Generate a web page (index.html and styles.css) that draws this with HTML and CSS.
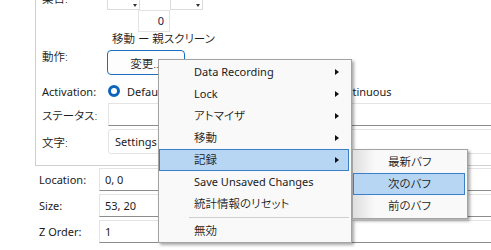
FILE: index.html
```html
<!DOCTYPE html>
<html lang="ja">
  <head>
    <meta charset="utf-8" />
    <title>properties</title>
    <link rel="stylesheet" href="styles.css">
  </head>
  <body>
    <div class="panel">
      <div class="group">
        <div class="row row-top">
          <span class="label ja">某日:</span>
          <div class="spins">
            <div class="spin"><i class="caret"></i></div>
            <div class="spin blank"></div>
            <div class="spin"><i class="caret"></i></div>
          </div>
        </div>
        <div class="row row-num">
          <span class="label"></span>
          <div class="num">0</div>
        </div>
        <div class="row row-move">
          <span class="label"></span>
          <span class="move ja">移動 ー 親スクリーン</span>
        </div>
        <div class="row row-action">
          <span class="label ja">動作:</span>
          <button class="btn ja">変更...</button>
        </div>
        <div class="row row-activation">
          <span class="label">Activation:</span>
          <div class="radios">
            <label class="radio-opt first"><i class="radio checked"></i>Default</label>
            <label class="radio-opt"><i class="radio"></i>Continuous</label>
          </div>
        </div>
        <div class="row row-status">
          <span class="label ja">ステータス:</span>
          <div class="field"></div>
        </div>
        <div class="row row-text">
          <span class="label ja">文字:</span>
          <div class="field combo">Settings</div>
        </div>
      </div>

      <div class="props">
        <div class="prop">
          <span class="label">Location:</span>
          <div class="field">0, 0</div>
        </div>
        <div class="prop">
          <span class="label">Size:</span>
          <div class="field">53, 20</div>
        </div>
        <div class="prop">
          <span class="label">Z Order:</span>
          <div class="field">1</div>
        </div>
      </div>
    </div>

    <!-- context menu -->
    <ul class="menu">
      <li class="item sub">Data Recording</li>
      <li class="item sub">Lock</li>
      <li class="item sub ja">アトマイザ</li>
      <li class="item sub ja">移動</li>
      <li class="item sub ja active">記録</li>
      <li class="item">Save Unsaved Changes</li>
      <li class="item ja">統計情報のリセット</li>
      <li class="sep"></li>
      <li class="item ja">無効</li>
    </ul>
    <ul class="menu submenu">
      <li class="item ja">最新バフ</li>
      <li class="item ja active">次のバフ</li>
      <li class="item ja">前のバフ</li>
    </ul>
  </body>
</html>
```

FILE: styles.css
```css
* {
  padding: 0;
  margin: 0;
  box-sizing: border-box;
}
body {
  background-color: #ffffff;
  font-family: "Noto Sans", "Noto Sans CJK JP", sans-serif;
  font-size: 11px;
  color: #1b1b1b;
  overflow: hidden;
  width: 491px;
  height: 250px;
}
.ja {
  font-size: 11.5px;
  font-weight: 350;
  font-feature-settings: "palt";
}
.panel {
  width: 100%;
  overflow: hidden;
}
.group {
  margin-top: -14px;
  margin-left: 35px;
  width: 480px;
  border-left: 1px solid #cfcfcf;
  border-bottom: 1px solid #cfcfcf;
  padding: 0 0 11px 6px;
}
.row {
  display: grid;
  grid-template-columns: 65px 1fr;
  align-items: center;
}
.label {
  white-space: nowrap;
}
.row-top {
  height: 22px;
}
.row-top .label {
  align-self: start;
  line-height: 25px;
}
.spins {
  display: grid;
  grid-template-columns: 33px 30px 33px;
  height: 22px;
}
.spin {
  position: relative;
  border: 1px solid #dcdcdc;
  background-color: #ffffff;
}
.spin.blank {
  border-color: transparent;
}
.caret {
  position: absolute;
  right: 2px;
  top: 15px;
  border-top: 3px solid #333;
  border-left: 2px solid transparent;
  border-right: 2px solid transparent;
}
.row-num {
  margin-top: 2px;
  height: 22px;
}
.num {
  margin-left: 31px;
  width: 32px;
  height: 22px;
  border: 1px solid #e3e3e3;
  text-align: right;
  padding-right: 5px;
  line-height: 20px;
  color: #22224a;
}
.row-move {
  height: 14px;
}
.move {
  padding-left: 5px;
  line-height: 14px;
}
.row-action {
  margin-top: 4px;
  height: 25px;
}
.row-action .label {
  align-self: start;
  line-height: 14px;
}
.btn {
  width: 78px;
  height: 25px;
  background-color: #fdfdfd;
  border: 1px solid #1d6ec0;
  border-radius: 4px;
  font-family: inherit;
  color: #1b1b1b;
}
.row-activation {
  margin-top: 6px;
  height: 20px;
}
.radios {
  display: flex;
  align-items: center;
  padding-left: 1px;
}
.radio-opt {
  display: flex;
  align-items: center;
  gap: 7px;
}
.radio-opt.first {
  width: 205px;
}
.radio {
  width: 12px;
  height: 12px;
  border-radius: 50%;
  border: 1px solid #8a8a8a;
  background-color: #f7f7f7;
}
.radio.checked {
  border: 3.5px solid #0c64bd;
  background-color: #ffffff;
}
.field {
  height: 100%;
  background-color: #ffffff;
  border: 1px solid #e4e4e4;
  border-bottom-color: #8c8c8c;
  padding-left: 6px;
  display: flex;
  align-items: center;
}
.row-status {
  margin-top: 2px;
  height: 23px;
}
.row-status .field {
  margin-left: 1px;
}
.row-text {
  margin-top: 3px;
  height: 25px;
}
.combo {
  margin-left: 1px;
  border-radius: 3px;
  border-bottom-color: #e4e4e4;
  padding-left: 6px;
}
.props {
  padding: 2px 0 0 39px;
  width: 500px;
}
.prop {
  display: grid;
  grid-template-columns: 60px 1fr;
  align-items: center;
  height: 23px;
  margin-bottom: 3px;
}
.prop:last-child {
  margin-top: 1px;
}
.prop .field {
  padding-left: 5px;
}
.menu {
  position: absolute;
  left: 158px;
  top: 59px;
  width: 194px;
  list-style: none;
  background-color: #f9f9f9;
  border: 1px solid #a3a3a3;
  padding: 1px 0 0 0;
  box-shadow: 2px 2px 3px rgba(0, 0, 0, 0.35);
}
.item {
  position: relative;
  height: 22px;
  line-height: 20px;
  margin-right: 2px;
  padding-left: 34px;
  border: 1px solid transparent;
  white-space: nowrap;
}
.item.sub::after {
  content: "";
  position: absolute;
  right: 9px;
  top: 7px;
  border-left: 4px solid #111;
  border-top: 3.5px solid transparent;
  border-bottom: 3.5px solid transparent;
}
.item.active {
  background-color: #b7d6f3;
  border-color: #3a80c6;
}
.sep {
  height: 1px;
  margin: 2px 2px 2px 30px;
  background-color: #cfcfcf;
}
.submenu {
  left: 352px;
  top: 149px;
  width: 116px;
  padding-bottom: 1px;
  background: linear-gradient(to right, #dedede, #f9f9f9 22px);
}
```
